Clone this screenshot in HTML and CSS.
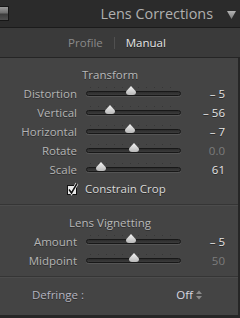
FILE: index.html
```html
<!DOCTYPE html>
<html>
<head>
<meta charset="utf-8">
<link rel="stylesheet" href="styles.css">
</head>
<body>
<div class="app">
  <header class="header">
    <span class="switch"></span>
    <div class="title-wrap">
      <span class="title">Lens Corrections</span>
      <svg class="tri" width="9" height="9" viewBox="0 0 9 9"><defs><linearGradient id="tg" x1="0" y1="0" x2="0" y2="1"><stop offset="0" stop-color="#b4b4b4"/><stop offset="1" stop-color="#7c7c7c"/></linearGradient></defs><path d="M0 1 L9 1 L4.5 9 Z" fill="url(#tg)"/></svg>
    </div>
  </header>
  <nav class="tabs">
    <span class="tab">Profile</span>
    <span class="tab-sep"></span>
    <span class="tab active">Manual</span>
  </nav>
  <main class="panel">
    <section class="section">
      <div class="sec-title">Transform</div>
      <div class="row"><span class="label">Distortion</span><div class="slider"><span class="thumb" style="left:44px"></span></div><span class="value on">– 5</span></div>
      <div class="row"><span class="label">Vertical</span><div class="slider"><span class="thumb" style="left:23px"></span></div><span class="value on">– 56</span></div>
      <div class="row"><span class="label">Horizontal</span><div class="slider"><span class="thumb" style="left:43px"></span></div><span class="value on">– 7</span></div>
      <div class="row"><span class="label">Rotate</span><div class="slider"><span class="thumb" style="left:47px"></span></div><span class="value off">0.0</span></div>
      <div class="row"><span class="label">Scale</span><div class="slider"><span class="thumb" style="left:14px"></span></div><span class="value on">61</span></div>
      <div class="check-row">
        <svg class="check" width="14" height="14" viewBox="0 0 14 14"><rect x="1.5" y="3.5" width="9" height="9" fill="#e8e8e8" stroke="#111"/><path d="M3 7.5 L5.5 11 L11 1.5" fill="none" stroke="#f4f4f4" stroke-width="3"/><path d="M3 7.5 L5.5 11 L11 1.5" fill="none" stroke="#111" stroke-width="1.5"/></svg>
        <span class="check-label">Constrain Crop</span>
      </div>
    </section>
    <section class="section">
      <div class="sec-title">Lens Vignetting</div>
      <div class="row"><span class="label">Amount</span><div class="slider"><span class="thumb" style="left:44px"></span></div><span class="value on">– 5</span></div>
      <div class="row"><span class="label">Midpoint</span><div class="slider"><span class="thumb" style="left:47px"></span></div><span class="value off">50</span></div>
    </section>
    <section class="section last">
      <div class="defringe">
        <span class="def-label">Defringe :</span>
        <span class="def-value">Off <svg class="updown" width="6" height="10" viewBox="0 0 6 10"><path d="M0 4 L3 0.5 L6 4 Z M0 6 L3 9.5 L6 6 Z" fill="#8a8a8a"/></svg></span>
      </div>
    </section>
  </main>
</div>
</body>
</html>
```

FILE: styles.css
```css
* { box-sizing: border-box; }
html, body { margin: 0; padding: 0; }
body {
  width: 240px;
  height: 318px;
  background: #2a2a2a;
  font-family: "Open Sans", "Liberation Sans", sans-serif;
  overflow: hidden;
}
.app { width: 240px; height: 318px; display: flex; flex-direction: column; }
.header {
  height: 28px;
  background: #2b2b2b;
  border-bottom: 1px solid #1b1b1b;
  display: flex;
  align-items: center;
  justify-content: space-between;
  padding-right: 4px;
}
.switch {
  width: 10px;
  height: 15px;
  margin-left: -1px;
  border: 1px solid #161616;
  background: linear-gradient(#9a9a9a 0, #6e6e6e 45%, #3c3c3c 55%, #505050 100%);
}
.title-wrap { display: flex; align-items: center; gap: 14px; }
.title {
  color: #b0b0b0;
  font-size: 14.4px;
  line-height: 18px;
}
.tri { display: block; margin-top: 1px; }
.tabs {
  height: 30px;
  background: #3a3a3a;
  border-bottom: 1px solid #252525;
  display: flex;
  align-items: center;
  justify-content: center;
  gap: 11px;
  padding-right: 6px;
  font-size: 11.5px;
}
.tab { color: #8a8a8a; }
.tab.active { color: #e6e6e6; text-shadow: 0 1px 0 #222; }
.tab-sep { width: 1px; height: 12px; background: #505050; }
.panel {
  flex: 1;
  background: #444444;
  border-right: 2px solid #262626;
  border-bottom: 3px solid #262626;
  display: flex;
  flex-direction: column;
}
.section {
  padding: 7px 0 6px;
  border-bottom: 1px solid #353535;
  box-shadow: 0 1px 0 #4c4c4c;
  margin-bottom: 1px;
}
.section.last { border-bottom: none; box-shadow: none; padding-top: 7px; }
.sec-title {
  height: 19px;
  line-height: 19px;
  text-align: center;
  color: #b8b8b8;
  font-size: 11.5px;
  text-shadow: 0 1px 0 #2e2e2e;
  padding-right: 18px;
}
.row {
  height: 19px;
  display: grid;
  grid-template-columns: 77px 95px 35px;
  column-gap: 9px;
  align-items: center;
}
.label {
  text-align: right;
  color: #b4b4b4;
  font-size: 11.5px;
  text-shadow: 0 1px 0 #2e2e2e;
}
.slider {
  position: relative;
  height: 5px;
  border: 1px solid #181818;
  border-radius: 3px;
  background: linear-gradient(#2c2c2c, #3c3c3c);
  box-shadow: 0 1px 0 #555;
}
.slider::before {
  content: "";
  position: absolute;
  left: 3px;
  right: 5px;
  top: -5px;
  height: 1px;
  background: repeating-linear-gradient(to right, #363636 0 1px, transparent 1px 8px);
}
.thumb {
  position: absolute;
  top: -6px;
  width: 10px;
  height: 9px;
  margin-left: -5px;
  background: linear-gradient(#f4f4f4, #b8b8b8);
  clip-path: polygon(50% 0, 100% 60%, 100% 100%, 0 100%, 0 60%);
  border-radius: 0 0 3px 3px;
}
.value {
  text-align: right;
  font-size: 11.5px;
}
.value.on { color: #e4e4e4; text-shadow: 0 1px 0 #2a2a2a; }
.value.off { color: #7c7c7c; }
.check-row {
  height: 19px;
  display: flex;
  align-items: center;
  padding-left: 66px;
  gap: 5px;
}
.check { display: block; }
.check-label { color: #d8d8d8; font-size: 11.5px; text-shadow: 0 1px 0 #2a2a2a; }
.defringe {
  height: 19px;
  display: flex;
  align-items: center;
  justify-content: space-between;
  padding: 0 36px 0 32px;
  font-size: 11.5px;
}
.def-label { color: #b4b4c0; text-shadow: 0 1px 0 #2e2e2e; }
.def-value { color: #d8d8e0; display: flex; align-items: center; gap: 3px; }
.updown { display: block; }
```
